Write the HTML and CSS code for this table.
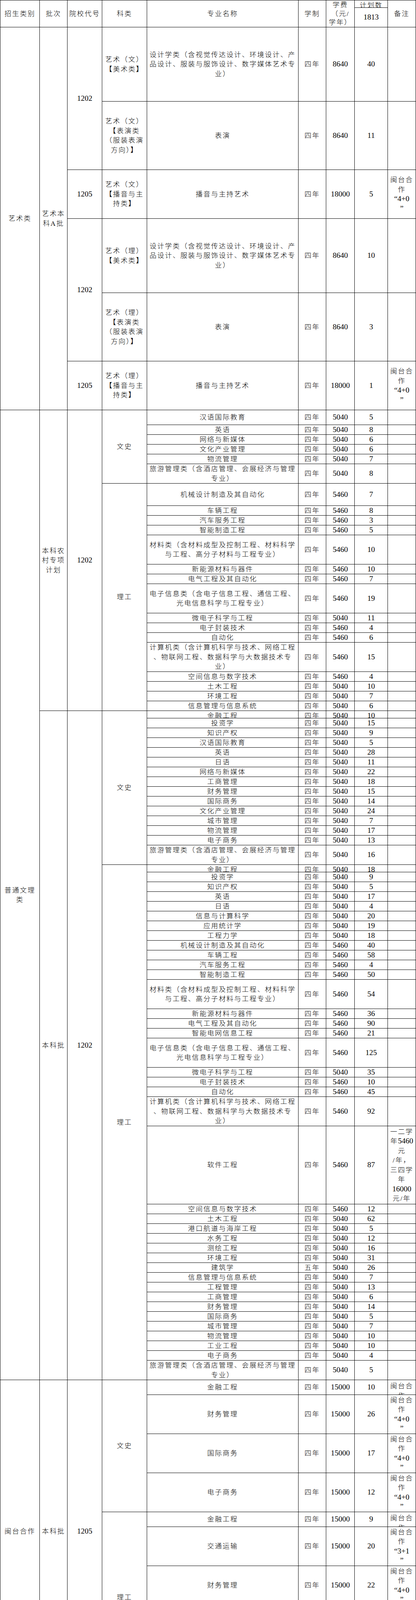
FILE: index.html
```html
<!DOCTYPE html>
<html lang="zh-CN">
<head>
<meta charset="utf-8">
<title>招生计划</title>
<link rel="stylesheet" href="styles.css">
</head>
<body>
<div class="sheet">
<!-- 表头 -->
<div class="c r2">招生类别</div><div class="c r2">批次</div><div class="c r2">院校代号</div><div class="c r2">科类</div><div class="c r2">专业名称</div><div class="c r2">学制</div><div class="c r2 hd"><p class="t">学费<br>（元/<br>学年）</p></div><div class="c top">计划数</div><div class="c r2">备注</div>
<div class="c n">1813</div>

<!-- 艺术类 -->
<div class="c r6">艺术类</div><div class="c r6"><p class="t">艺术本<br>科A批</p></div><div class="c r2 n">1202</div>
<div class="c"><p class="t">艺术（文）<br>【美术类】</p></div><div class="c"><p class="t">设计学类（含视觉传达设计、环境设计、产<br>品设计、服装与服饰设计、数字媒体艺术专<br>业）</p></div><div class="c">四年</div><div class="c n">8640</div><div class="c n">40</div><div class="c"></div>
<div class="c"><p class="t">艺术（文）<br>【表演类<br>（服装表演<br>方向）】</p></div><div class="c">表演</div><div class="c">四年</div><div class="c n">8640</div><div class="c n">11</div><div class="c"></div>
<div class="c n">1205</div><div class="c"><p class="t">艺术（文）<br>【播音与主<br>持类】</p></div><div class="c">播音与主持艺术</div><div class="c">四年</div><div class="c n">18000</div><div class="c n">5</div><div class="c"><p class="t">闽台合<br>作<br><span class="d">“4+0</span><br><span class="d">”</span></p></div>
<div class="c r2 n">1202</div>
<div class="c"><p class="t">艺术（理）<br>【美术类】</p></div><div class="c"><p class="t">设计学类（含视觉传达设计、环境设计、产<br>品设计、服装与服饰设计、数字媒体艺术专<br>业）</p></div><div class="c">四年</div><div class="c n">8640</div><div class="c n">10</div><div class="c"></div>
<div class="c"><p class="t">艺术（理）<br>【表演类<br>（服装表演<br>方向）】</p></div><div class="c">表演</div><div class="c">四年</div><div class="c n">8640</div><div class="c n">3</div><div class="c"></div>
<div class="c n">1205</div><div class="c"><p class="t">艺术（理）<br>【播音与主<br>持类】</p></div><div class="c">播音与主持艺术</div><div class="c">四年</div><div class="c n">18000</div><div class="c n">1</div><div class="c"><p class="t">闽台合<br>作<br><span class="d">“4+0</span><br><span class="d">”</span></p></div>

<!-- 普通文理类 · 本科农村专项计划 -->
<div class="c r76"><p class="t">普通文理<br>类</p></div><div class="c r22"><p class="t">本科农<br>村专项<br>计划</p></div><div class="c r22 n">1202</div>
<div class="c r6">文史</div>
<div class="c">汉语国际教育</div><div class="c">四年</div><div class="c n">5040</div><div class="c n">5</div><div class="c"></div>
<div class="c">英语</div><div class="c">四年</div><div class="c n">5040</div><div class="c n">8</div><div class="c"></div>
<div class="c">网络与新媒体</div><div class="c">四年</div><div class="c n">5040</div><div class="c n">6</div><div class="c"></div>
<div class="c">文化产业管理</div><div class="c">四年</div><div class="c n">5040</div><div class="c n">6</div><div class="c"></div>
<div class="c">物流管理</div><div class="c">四年</div><div class="c n">5040</div><div class="c n">7</div><div class="c"></div>
<div class="c"><p class="t">旅游管理类（含酒店管理、会展经济与管理<br>专业）</p></div><div class="c">四年</div><div class="c n">5040</div><div class="c n">8</div><div class="c"></div>
<div class="c r16">理工</div>
<div class="c">机械设计制造及其自动化</div><div class="c">四年</div><div class="c n">5460</div><div class="c n">7</div><div class="c"></div>
<div class="c">车辆工程</div><div class="c">四年</div><div class="c n">5460</div><div class="c n">8</div><div class="c"></div>
<div class="c">汽车服务工程</div><div class="c">四年</div><div class="c n">5460</div><div class="c n">3</div><div class="c"></div>
<div class="c">智能制造工程</div><div class="c">四年</div><div class="c n">5460</div><div class="c n">5</div><div class="c"></div>
<div class="c"><p class="t">材料类（含材料成型及控制工程、材料科学<br>与工程、高分子材料与工程专业）</p></div><div class="c">四年</div><div class="c n">5460</div><div class="c n">10</div><div class="c"></div>
<div class="c">新能源材料与器件</div><div class="c">四年</div><div class="c n">5460</div><div class="c n">10</div><div class="c"></div>
<div class="c">电气工程及其自动化</div><div class="c">四年</div><div class="c n">5460</div><div class="c n">7</div><div class="c"></div>
<div class="c"><p class="t">电子信息类（含电子信息工程、通信工程、<br>光电信息科学与工程专业）</p></div><div class="c">四年</div><div class="c n">5460</div><div class="c n">19</div><div class="c"></div>
<div class="c">微电子科学与工程</div><div class="c">四年</div><div class="c n">5040</div><div class="c n">11</div><div class="c"></div>
<div class="c">电子封装技术</div><div class="c">四年</div><div class="c n">5460</div><div class="c n">4</div><div class="c"></div>
<div class="c">自动化</div><div class="c">四年</div><div class="c n">5460</div><div class="c n">6</div><div class="c"></div>
<div class="c"><p class="t">计算机类（含计算机科学与技术、网络工程<br>、物联网工程、数据科学与大数据技术专<br>业）</p></div><div class="c">四年</div><div class="c n">5460</div><div class="c n">15</div><div class="c"></div>
<div class="c">空间信息与数字技术</div><div class="c">四年</div><div class="c n">5460</div><div class="c n">4</div><div class="c"></div>
<div class="c">土木工程</div><div class="c">四年</div><div class="c n">5040</div><div class="c n">10</div><div class="c"></div>
<div class="c">环境工程</div><div class="c">四年</div><div class="c n">5040</div><div class="c n">7</div><div class="c"></div>
<div class="c">信息管理与信息系统</div><div class="c">四年</div><div class="c n">5040</div><div class="c n">6</div><div class="c"></div>

<!-- 普通文理类 · 本科批 -->
<div class="c r54">本科批</div><div class="c r54 n">1202</div>
<div class="c r15">文史</div>
<div class="c top">金融工程</div><div class="c top">四年</div><div class="c top n">5040</div><div class="c top n">10</div><div class="c"></div>
<div class="c">投资学</div><div class="c">四年</div><div class="c n">5040</div><div class="c n">15</div><div class="c"></div>
<div class="c">知识产权</div><div class="c">四年</div><div class="c n">5040</div><div class="c n">9</div><div class="c"></div>
<div class="c">汉语国际教育</div><div class="c">四年</div><div class="c n">5040</div><div class="c n">5</div><div class="c"></div>
<div class="c">英语</div><div class="c">四年</div><div class="c n">5040</div><div class="c n">28</div><div class="c"></div>
<div class="c">日语</div><div class="c">四年</div><div class="c n">5040</div><div class="c n">11</div><div class="c"></div>
<div class="c">网络与新媒体</div><div class="c">四年</div><div class="c n">5040</div><div class="c n">22</div><div class="c"></div>
<div class="c">工商管理</div><div class="c">四年</div><div class="c n">5040</div><div class="c n">18</div><div class="c"></div>
<div class="c">财务管理</div><div class="c">四年</div><div class="c n">5040</div><div class="c n">15</div><div class="c"></div>
<div class="c">国际商务</div><div class="c">四年</div><div class="c n">5040</div><div class="c n">14</div><div class="c"></div>
<div class="c">文化产业管理</div><div class="c">四年</div><div class="c n">5040</div><div class="c n">24</div><div class="c"></div>
<div class="c">城市管理</div><div class="c">四年</div><div class="c n">5040</div><div class="c n">7</div><div class="c"></div>
<div class="c">物流管理</div><div class="c">四年</div><div class="c n">5040</div><div class="c n">17</div><div class="c"></div>
<div class="c">电子商务</div><div class="c">四年</div><div class="c n">5040</div><div class="c n">13</div><div class="c"></div>
<div class="c"><p class="t">旅游管理类（含酒店管理、会展经济与管理<br>专业）</p></div><div class="c">四年</div><div class="c n">5040</div><div class="c n">16</div><div class="c"></div>
<div class="c r39">理工</div>
<div class="c top">金融工程</div><div class="c top">四年</div><div class="c top n">5040</div><div class="c top n">18</div><div class="c"></div>
<div class="c">投资学</div><div class="c">四年</div><div class="c n">5040</div><div class="c n">9</div><div class="c"></div>
<div class="c">知识产权</div><div class="c">四年</div><div class="c n">5040</div><div class="c n">5</div><div class="c"></div>
<div class="c">英语</div><div class="c">四年</div><div class="c n">5040</div><div class="c n">17</div><div class="c"></div>
<div class="c">日语</div><div class="c">四年</div><div class="c n">5040</div><div class="c n">4</div><div class="c"></div>
<div class="c">信息与计算科学</div><div class="c">四年</div><div class="c n">5040</div><div class="c n">20</div><div class="c"></div>
<div class="c">应用统计学</div><div class="c">四年</div><div class="c n">5040</div><div class="c n">19</div><div class="c"></div>
<div class="c">工程力学</div><div class="c">四年</div><div class="c n">5040</div><div class="c n">18</div><div class="c"></div>
<div class="c">机械设计制造及其自动化</div><div class="c">四年</div><div class="c n">5460</div><div class="c n">40</div><div class="c"></div>
<div class="c">车辆工程</div><div class="c">四年</div><div class="c n">5460</div><div class="c n">58</div><div class="c"></div>
<div class="c">汽车服务工程</div><div class="c">四年</div><div class="c n">5460</div><div class="c n">4</div><div class="c"></div>
<div class="c">智能制造工程</div><div class="c">四年</div><div class="c n">5460</div><div class="c n">50</div><div class="c"></div>
<div class="c"><p class="t">材料类（含材料成型及控制工程、材料科学<br>与工程、高分子材料与工程专业）</p></div><div class="c">四年</div><div class="c n">5460</div><div class="c n">54</div><div class="c"></div>
<div class="c">新能源材料与器件</div><div class="c">四年</div><div class="c n">5460</div><div class="c n">36</div><div class="c"></div>
<div class="c">电气工程及其自动化</div><div class="c">四年</div><div class="c n">5460</div><div class="c n">90</div><div class="c"></div>
<div class="c">智能电网信息工程</div><div class="c">四年</div><div class="c n">5460</div><div class="c n">21</div><div class="c"></div>
<div class="c"><p class="t">电子信息类（含电子信息工程、通信工程、<br>光电信息科学与工程专业）</p></div><div class="c">四年</div><div class="c n">5460</div><div class="c n">125</div><div class="c"></div>
<div class="c">微电子科学与工程</div><div class="c">四年</div><div class="c n">5040</div><div class="c n">35</div><div class="c"></div>
<div class="c">电子封装技术</div><div class="c">四年</div><div class="c n">5460</div><div class="c n">10</div><div class="c"></div>
<div class="c">自动化</div><div class="c">四年</div><div class="c n">5460</div><div class="c n">45</div><div class="c"></div>
<div class="c"><p class="t">计算机类（含计算机科学与技术、网络工程<br>、物联网工程、数据科学与大数据技术专<br>业）</p></div><div class="c">四年</div><div class="c n">5460</div><div class="c n">92</div><div class="c"></div>
<div class="c">软件工程</div><div class="c">四年</div><div class="c n">5460</div><div class="c n">87</div><div class="c"><p class="t">一二学<br>年<span class="d">5460</span><br>元<br>/年，<br>三四学<br>年<br><span class="d">16000</span><br>元/年</p></div>
<div class="c">空间信息与数字技术</div><div class="c">四年</div><div class="c n">5460</div><div class="c n">12</div><div class="c"></div>
<div class="c">土木工程</div><div class="c">四年</div><div class="c n">5040</div><div class="c n">62</div><div class="c"></div>
<div class="c">港口航道与海岸工程</div><div class="c">四年</div><div class="c n">5040</div><div class="c n">5</div><div class="c"></div>
<div class="c">水务工程</div><div class="c">四年</div><div class="c n">5040</div><div class="c n">12</div><div class="c"></div>
<div class="c">测绘工程</div><div class="c">四年</div><div class="c n">5040</div><div class="c n">16</div><div class="c"></div>
<div class="c">环境工程</div><div class="c">四年</div><div class="c n">5040</div><div class="c n">31</div><div class="c"></div>
<div class="c">建筑学</div><div class="c">五年</div><div class="c n">5040</div><div class="c n">26</div><div class="c"></div>
<div class="c">信息管理与信息系统</div><div class="c">四年</div><div class="c n">5040</div><div class="c n">7</div><div class="c"></div>
<div class="c">工程管理</div><div class="c">四年</div><div class="c n">5040</div><div class="c n">13</div><div class="c"></div>
<div class="c">工商管理</div><div class="c">四年</div><div class="c n">5040</div><div class="c n">6</div><div class="c"></div>
<div class="c">财务管理</div><div class="c">四年</div><div class="c n">5040</div><div class="c n">14</div><div class="c"></div>
<div class="c">国际商务</div><div class="c">四年</div><div class="c n">5040</div><div class="c n">5</div><div class="c"></div>
<div class="c">城市管理</div><div class="c">四年</div><div class="c n">5040</div><div class="c n">7</div><div class="c"></div>
<div class="c">物流管理</div><div class="c">四年</div><div class="c n">5040</div><div class="c n">10</div><div class="c"></div>
<div class="c">工业工程</div><div class="c">四年</div><div class="c n">5040</div><div class="c n">10</div><div class="c"></div>
<div class="c">电子商务</div><div class="c">四年</div><div class="c n">5040</div><div class="c n">4</div><div class="c"></div>
<div class="c"><p class="t">旅游管理类（含酒店管理、会展经济与管理<br>专业）</p></div><div class="c">四年</div><div class="c n">5040</div><div class="c n">5</div><div class="c"></div>

<!-- 闽台合作 -->
<div class="c r9">闽台合作</div><div class="c r9">本科批</div><div class="c r9 n">1205</div>
<div class="c r4">文史</div>
<div class="c">金融工程</div><div class="c">四年</div><div class="c n">15000</div><div class="c n">10</div><div class="c top pt"><p class="t">闽台合<br>作<br><span class="d">“4+0</span><br><span class="d">”</span></p></div>
<div class="c">财务管理</div><div class="c">四年</div><div class="c n">15000</div><div class="c n">26</div><div class="c"><p class="t">闽台合<br>作<br><span class="d">“4+0</span><br><span class="d">”</span></p></div>
<div class="c">国际商务</div><div class="c">四年</div><div class="c n">15000</div><div class="c n">17</div><div class="c"><p class="t">闽台合<br>作<br><span class="d">“4+0</span><br><span class="d">”</span></p></div>
<div class="c">电子商务</div><div class="c">四年</div><div class="c n">15000</div><div class="c n">12</div><div class="c"><p class="t">闽台合<br>作<br><span class="d">“4+0</span><br><span class="d">”</span></p></div>
<div class="c r5">理工</div>
<div class="c">金融工程</div><div class="c">四年</div><div class="c n">15000</div><div class="c n">9</div><div class="c top pt"><p class="t">闽台合<br>作<br><span class="d">“4+0</span><br><span class="d">”</span></p></div>
<div class="c">交通运输</div><div class="c">四年</div><div class="c n">15000</div><div class="c n">20</div><div class="c"><p class="t">闽台合<br>作<br><span class="d">“3+1</span><br><span class="d">”</span></p></div>
<div class="c">财务管理</div><div class="c">四年</div><div class="c n">15000</div><div class="c n">22</div><div class="c"><p class="t">闽台合<br>作<br><span class="d">“4+0</span><br><span class="d">”</span></p></div>
<div class="c">国际商务</div><div class="c">四年</div><div class="c n">15000</div><div class="c n">8</div><div class="c"><p class="t">闽台合<br>作<br><span class="d">“4+0</span><br><span class="d">”</span></p></div>
<div class="c">电子商务</div><div class="c">四年</div><div class="c n">15000</div><div class="c n">8</div><div class="c"><p class="t">闽台合<br>作<br><span class="d">“4+0</span><br><span class="d">”</span></p></div>

<!-- 中外合作 -->
<div class="c">中外合作</div><div class="c">本科批</div><div class="c n">1207</div><div class="c">理工</div><div class="c">电子信息工程</div><div class="c">四年</div><div class="c n">20000</div><div class="c n">20</div>
<div class="c"><p class="t">只招收<br>外语为<br>英语的<br>考生，<br>英语单<br>科成绩<br>不低于<br><span class="d">105</span>分<br>。</p></div>

<!-- 本科国际课程教育项目 -->
<div class="c r3"><p class="t">本科国际<br>课程教育<br>项目</p></div><div class="c r3">本科批</div><div class="c r3 n">1203</div>
<div class="c">文史</div><div class="c">财务管理</div><div class="c">四年</div><div class="c n">28000</div><div class="c n">44</div>
<div class="c top pt"><p class="t">只招收<br>外语为<br>英语的<br>考生，<br>英语单<br>科成绩<br>不低于<br><span class="d">105</span>分<br>。</p></div>
<div class="c">理工</div><div class="c">电气工程及其自动化</div><div class="c">四年</div><div class="c n">28000</div><div class="c n">25</div>
<div class="c"><p class="t">只招收<br>外语为<br>英语、<br>有志愿<br>考生，<br>英语单<br>科成绩<br>不低于<br><span class="d">105</span>分<br>。</p></div>
<div class="c">理工</div><div class="c">财务管理</div><div class="c">四年</div><div class="c n">28000</div><div class="c n">24</div>
<div class="c"><p class="t">只招收<br>外语为<br>英语、<br>有志愿<br>考生，<br>英语单<br>科成绩<br>不低于<br><span class="d">105</span>分<br>。</p></div>
</div>
</body>
</html>
```

FILE: styles.css
```css
html, body {
  margin: 0;
  padding: 0;
  background: #fff;
}

body {
  font-family: "Liberation Serif", "Noto Sans CJK SC", serif;
  color: #000;
}

/* 表格：列宽与行高沿用原表 */
.sheet {
  display: grid;
  width: 1066px;
  box-sizing: border-box;
  border-top: 1px solid #000;
  border-left: 1px solid #000;
  grid-template-columns: 101px 71px 89px 115px 388px 71px 73px 85px 72px;
  grid-template-rows:
    19px 50px
    190px 175px 125px 190px 175px 125px
    38px repeat(4, 25px) 50px
    57px repeat(3, 25px) 75px repeat(2, 25px) 75px repeat(3, 25px) 75px repeat(4, 25px)
    19px repeat(13, 25px) 50px
    19px repeat(11, 25px) 75px repeat(3, 25px) 75px repeat(3, 25px) 75px 200px repeat(16, 25px) 50px
    38px repeat(3, 100px)
    38px repeat(4, 100px)
    225px
    133px 250px 250px;
}

.c {
  box-sizing: border-box;
  border-right: 1px solid #000;
  border-bottom: 1px solid #000;
  display: flex;
  flex-direction: column;
  justify-content: center;
  text-align: center;
  overflow: hidden;
  padding: 0;
  font-size: 17.5px;
  font-weight: 300;
  letter-spacing: 2.2px;
  line-height: 24.5px;
  white-space: nowrap;
  min-height: 0;
  min-width: 0;
}

.t {
  margin: 0;
  flex: none;
}

.c.top {
  justify-content: flex-start;
}

.c.pt {
  padding-top: 3px;
}

.c.hd {
  line-height: 22.5px;
}

.n,
.d {
  font-size: 19.5px;
  letter-spacing: 0;
}

.d {
  line-height: 20px;
}

.r2 { grid-row: span 2; }
.r3 { grid-row: span 3; }
.r4 { grid-row: span 4; }
.r5 { grid-row: span 5; }
.r6 { grid-row: span 6; }
.r9 { grid-row: span 9; }
.r15 { grid-row: span 15; }
.r16 { grid-row: span 16; }
.r22 { grid-row: span 22; }
.r39 { grid-row: span 39; }
.r54 { grid-row: span 54; }
.r76 { grid-row: span 76; }
```
